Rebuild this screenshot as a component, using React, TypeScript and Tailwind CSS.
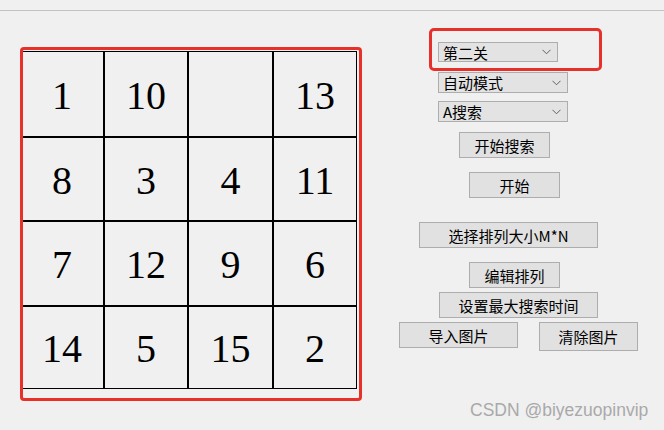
import React from "react";

const cjk = { fontFamily: '"Noto Sans CJK SC", "Noto Sans", sans-serif' };

function Chevron() {
  return (
    <svg width="9" height="6" viewBox="0 0 9 6" className="shrink-0">
      <polyline points="0.5,0.8 4.5,4.8 8.5,0.8" fill="none" stroke="#606060" strokeWidth="1" />
    </svg>
  );
}

function Combo({ label, w, h }: { label: string; w: string; h: string }) {
  return (
    <div
      className={`flex items-center justify-between border border-[#adadad] bg-[#e3e3e3] pl-[4px] pr-[6px] text-[15px] leading-none text-black ${w} ${h}`}
      style={cjk}
    >
      <span>{label}</span>
      <Chevron />
    </div>
  );
}

function Btn({ label, cls }: { label: string; cls: string }) {
  return (
    <div
      className={`flex items-center justify-center border border-[#adadad] bg-[#e1e1e1] text-[15px] leading-none text-black ${cls}`}
      style={cjk}
    >
      {label}
    </div>
  );
}

const nums: (number | null)[] = [1, 10, null, 13, 8, 3, 4, 11, 7, 12, 9, 6, 14, 5, 15, 2];

export default function App() {
  return (
    <div className="relative h-[430px] w-[664px] overflow-hidden bg-[#f0f0f0]">
      <div className="h-[11px] border-b border-[#c3c3c3]" />
      <div className="flex">
        <div className="w-[399px] shrink-0 pl-[20px] pt-[40px]">
          <div className="grid w-[337px] grid-cols-[82px_82px_83px_82px] grid-rows-[84px_82px_83px_81px] gap-[2px] bg-black p-[1px]">
            {nums.map((n, i) => (
              <div
                key={i}
                className="flex items-center justify-center bg-[#f0f0f0] pt-[3px] text-[40px] leading-none text-black"
                style={{ fontFamily: '"Liberation Serif", "DejaVu Serif", serif' }}
              >
                {n ?? ""}
              </div>
            ))}
          </div>
        </div>
        <div className="flex flex-col items-start">
          <div className="ml-[30px] mt-[17px] h-[43px] w-[173px] rounded-[5px] border-[3px] border-[#e8302a] pl-[6px] pt-[11px]">
            <Combo label="第二关" w="w-[120px]" h="h-[20px]" />
          </div>
          <div className="ml-[39px] mt-[1px]">
            <Combo label="自动模式" w="w-[130px]" h="h-[21px]" />
          </div>
          <div className="ml-[39px] mt-[8px]">
            <Combo label="A搜索" w="w-[130px]" h="h-[21px]" />
          </div>
          <Btn label="开始搜索" cls="ml-[60px] mt-[10px] h-[26px] w-[91px]" />
          <Btn label="开始" cls="ml-[70px] mt-[14px] h-[26px] w-[91px]" />
          <Btn label="选择排列大小M*N" cls="ml-[20px] mt-[24px] h-[26px] w-[179px]" />
          <Btn label="编辑排列" cls="ml-[70px] mt-[14px] h-[26px] w-[91px]" />
          <Btn label="设置最大搜索时间" cls="ml-[40px] mt-[4px] h-[26px] w-[159px]" />
          <div className="mt-[4px] flex items-start gap-[21px]">
            <Btn label="导入图片" cls="h-[26px] w-[119px]" />
            <Btn label="清除图片" cls="h-[29px] w-[99px]" />
          </div>
        </div>
      </div>
      <div className="pointer-events-none absolute left-[20px] top-[47px] h-[354px] w-[342px] rounded-[4px] border-[3px] border-[#e8302a]" />
      <div
        className="absolute left-[470px] top-[400px] text-[17.5px] leading-[20px] text-[#a9a9a9]"
        style={{ fontFamily: '"Liberation Sans", Arial, sans-serif' }}
      >
        CSDN @biyezuopinvip
      </div>
    </div>
  );
}
